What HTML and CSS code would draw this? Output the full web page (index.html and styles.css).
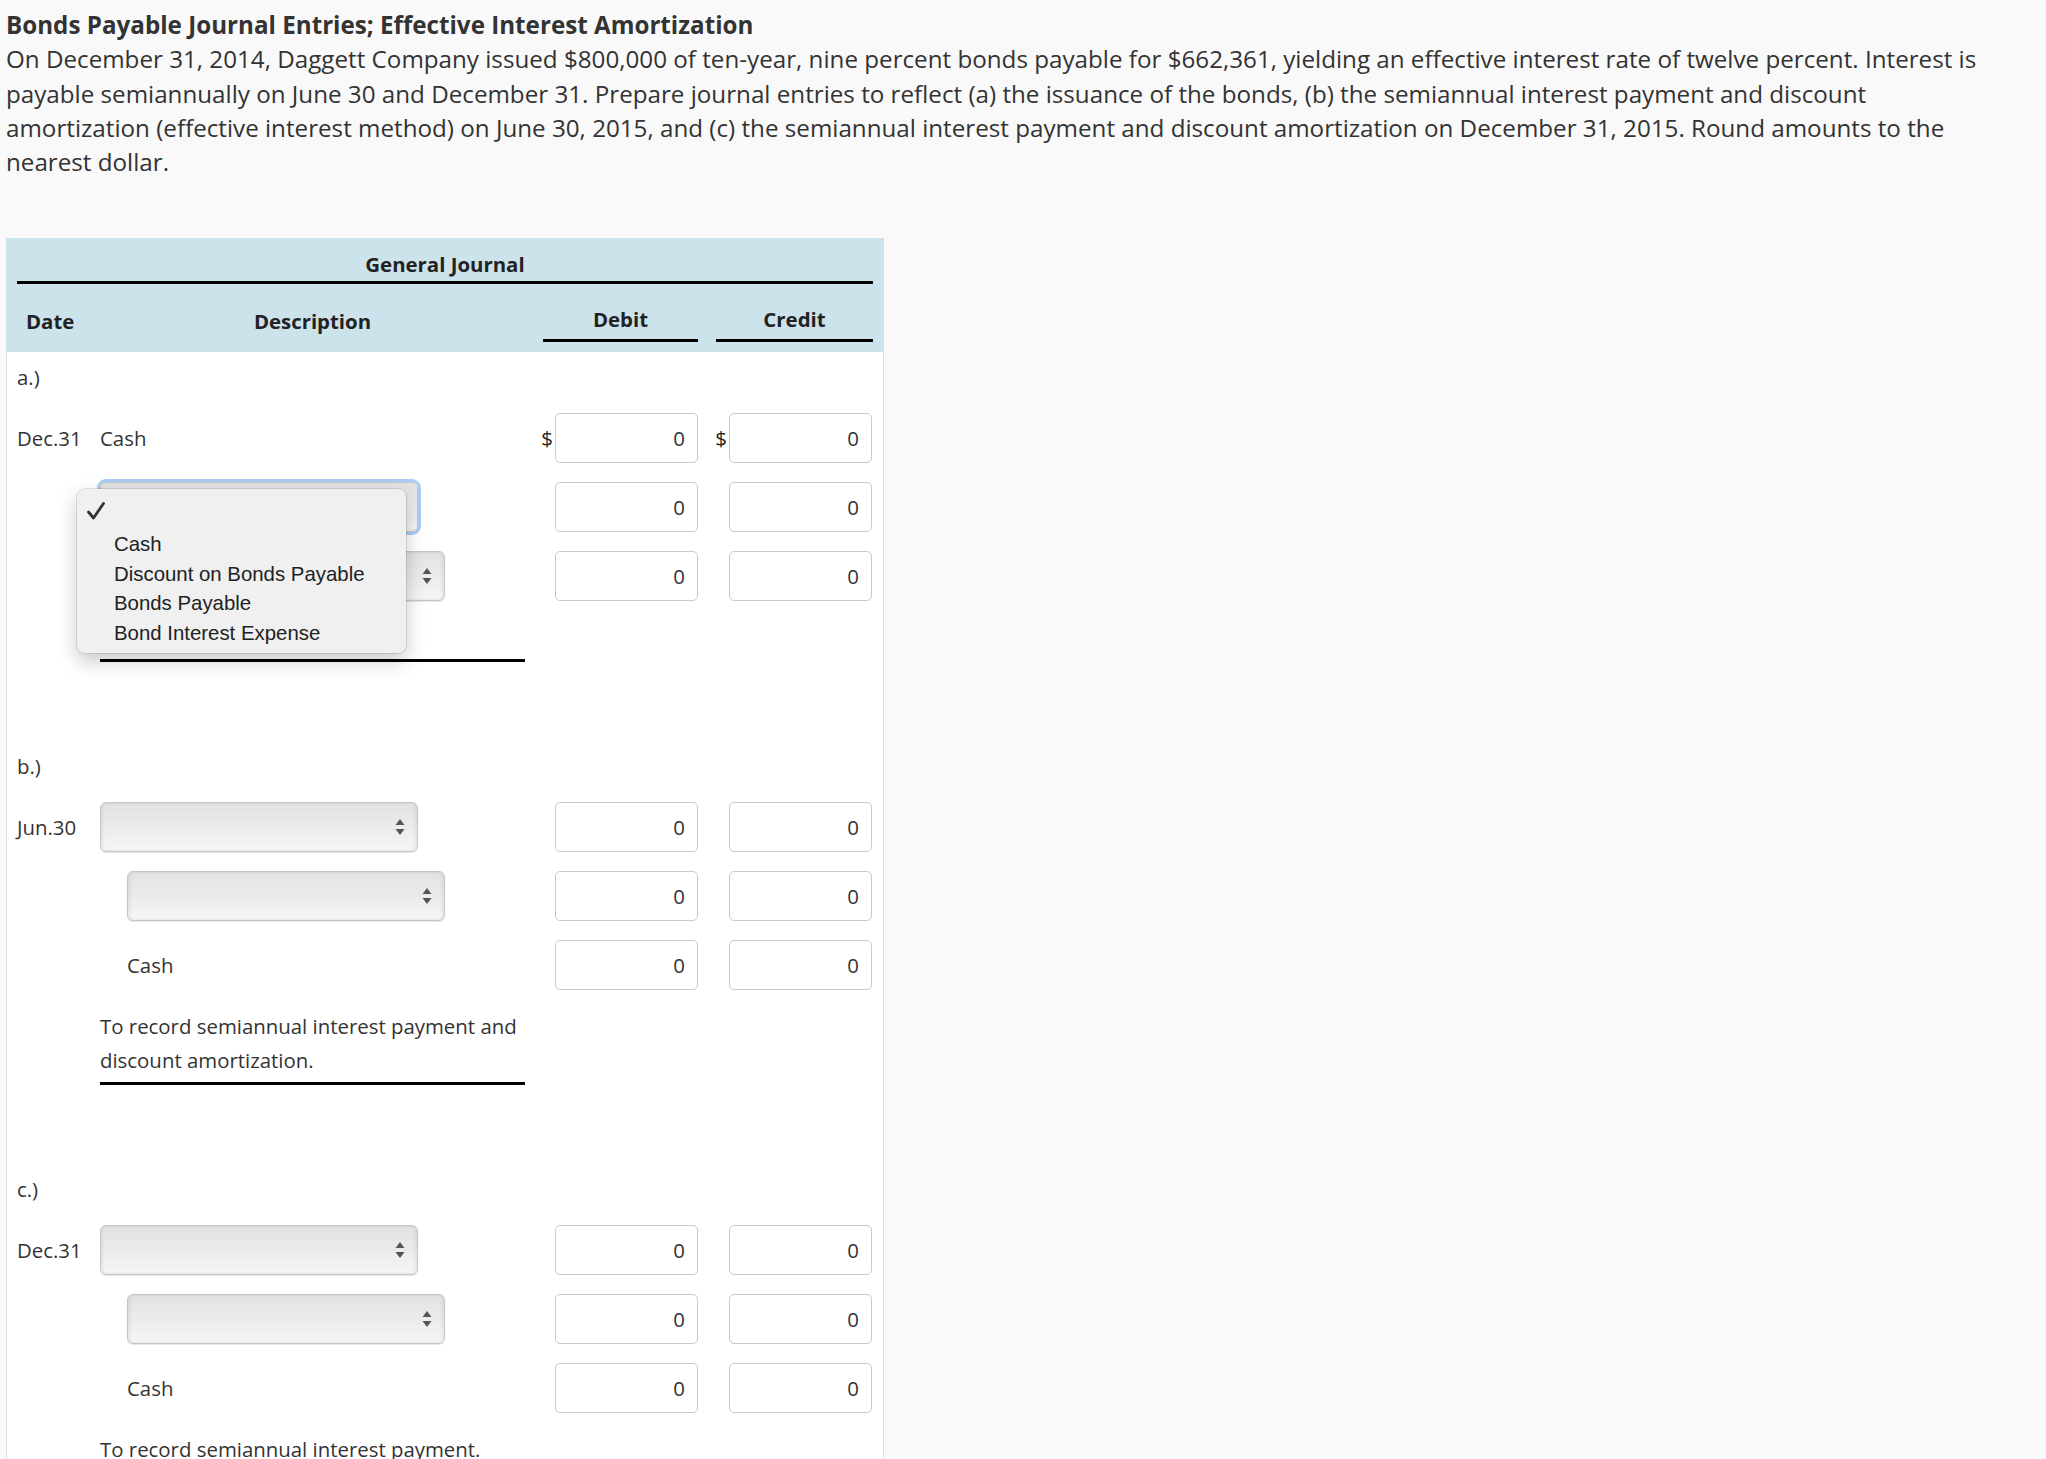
FILE: index.html
```html
<!DOCTYPE html>
<html lang="en">
<head>
    <meta charset="UTF-8">
    <title>Bonds Payable Journal Entries</title>
    <link rel="stylesheet" href="styles.css">
</head>
<body>
    <div class="page">
        <h1 class="title">Bonds Payable Journal Entries; Effective Interest Amortization</h1>
        <p class="intro">On December 31, 2014, Daggett Company issued $800,000 of ten-year, nine percent bonds payable for $662,361, yielding an effective interest rate of twelve percent. Interest is payable semiannually on June 30 and December 31. Prepare journal entries to reflect (a) the issuance of the bonds, (b) the semiannual interest payment and discount amortization (effective interest method) on June 30, 2015, and (c) the semiannual interest payment and discount amortization on December 31, 2015. Round amounts to the nearest dollar.</p>

        <div class="journal">
            <div class="journal-head">
                <div class="journal-title">General Journal</div>
                <div class="grid head-cols">
                    <div class="c-date">Date</div>
                    <div class="c-desc head-desc">Description</div>
                    <div class="c-debit head-amt">Debit</div>
                    <div class="c-credit head-amt">Credit</div>
                </div>
            </div>

            <div class="journal-body">
                <!-- a.) issuance -->
                <div class="entry">
                    <div class="entry-label">a.)</div>
                    <div class="grid line">
                        <div class="c-date">Dec.31</div>
                        <div class="c-desc">Cash</div>
                        <div class="c-debit amt"><span class="dollar">$</span><input class="num" type="text" value="0"></div>
                        <div class="c-credit amt"><span class="dollar">$</span><input class="num" type="text" value="0"></div>
                    </div>
                    <div class="grid line">
                        <div class="c-desc">
                            <div class="acct focused">
                                <svg class="arrows" width="10" height="16" viewBox="0 0 10 16"><path d="M5 0 L9.5 6 H0.5 Z M5 16 L9.5 10 H0.5 Z" fill="#555"/></svg>
                            </div>
                            <div class="menu">
                                <div class="menu-item">
                                    <svg class="check" width="18" height="18" viewBox="0 0 18 18"><path d="M1.5 10 L6.5 16 L16.5 1.5" fill="none" stroke="#333" stroke-width="2.8" stroke-linecap="round" stroke-linejoin="round"/></svg>
                                </div>
                                <div class="menu-item">Cash</div>
                                <div class="menu-item">Discount on Bonds Payable</div>
                                <div class="menu-item">Bonds Payable</div>
                                <div class="menu-item">Bond Interest Expense</div>
                            </div>
                        </div>
                        <div class="c-debit amt"><input class="num" type="text" value="0"></div>
                        <div class="c-credit amt"><input class="num" type="text" value="0"></div>
                    </div>
                    <div class="grid line">
                        <div class="c-desc">
                            <div class="acct indent">
                                <svg class="arrows" width="10" height="16" viewBox="0 0 10 16"><path d="M5 0 L9.5 6 H0.5 Z M5 16 L9.5 10 H0.5 Z" fill="#555"/></svg>
                            </div>
                        </div>
                        <div class="c-debit amt"><input class="num" type="text" value="0"></div>
                        <div class="c-credit amt"><input class="num" type="text" value="0"></div>
                    </div>
                    <div class="memo"><span class="hidden-memo">To record issuance.</span></div>
                </div>

                <!-- b.) June 30 -->
                <div class="entry">
                    <div class="entry-label">b.)</div>
                    <div class="grid line">
                        <div class="c-date">Jun.30</div>
                        <div class="c-desc">
                            <div class="acct">
                                <svg class="arrows" width="10" height="16" viewBox="0 0 10 16"><path d="M5 0 L9.5 6 H0.5 Z M5 16 L9.5 10 H0.5 Z" fill="#555"/></svg>
                            </div>
                        </div>
                        <div class="c-debit amt"><input class="num" type="text" value="0"></div>
                        <div class="c-credit amt"><input class="num" type="text" value="0"></div>
                    </div>
                    <div class="grid line">
                        <div class="c-desc">
                            <div class="acct indent">
                                <svg class="arrows" width="10" height="16" viewBox="0 0 10 16"><path d="M5 0 L9.5 6 H0.5 Z M5 16 L9.5 10 H0.5 Z" fill="#555"/></svg>
                            </div>
                        </div>
                        <div class="c-debit amt"><input class="num" type="text" value="0"></div>
                        <div class="c-credit amt"><input class="num" type="text" value="0"></div>
                    </div>
                    <div class="grid line">
                        <div class="c-desc indent">Cash</div>
                        <div class="c-debit amt"><input class="num" type="text" value="0"></div>
                        <div class="c-credit amt"><input class="num" type="text" value="0"></div>
                    </div>
                    <div class="memo">To record semiannual interest payment and discount amortization.</div>
                </div>

                <!-- c.) December 31 -->
                <div class="entry">
                    <div class="entry-label">c.)</div>
                    <div class="grid line">
                        <div class="c-date">Dec.31</div>
                        <div class="c-desc">
                            <div class="acct">
                                <svg class="arrows" width="10" height="16" viewBox="0 0 10 16"><path d="M5 0 L9.5 6 H0.5 Z M5 16 L9.5 10 H0.5 Z" fill="#555"/></svg>
                            </div>
                        </div>
                        <div class="c-debit amt"><input class="num" type="text" value="0"></div>
                        <div class="c-credit amt"><input class="num" type="text" value="0"></div>
                    </div>
                    <div class="grid line">
                        <div class="c-desc">
                            <div class="acct indent">
                                <svg class="arrows" width="10" height="16" viewBox="0 0 10 16"><path d="M5 0 L9.5 6 H0.5 Z M5 16 L9.5 10 H0.5 Z" fill="#555"/></svg>
                            </div>
                        </div>
                        <div class="c-debit amt"><input class="num" type="text" value="0"></div>
                        <div class="c-credit amt"><input class="num" type="text" value="0"></div>
                    </div>
                    <div class="grid line">
                        <div class="c-desc indent">Cash</div>
                        <div class="c-debit amt"><input class="num" type="text" value="0"></div>
                        <div class="c-credit amt"><input class="num" type="text" value="0"></div>
                    </div>
                    <div class="memo">To record semiannual interest payment.</div>
                </div>
            </div>
        </div>
    </div>
</body>
</html>
```

FILE: styles.css
```css
body {
    margin: 0;
    background-color: #f9f9f9;
    color: #333;
    font-family: 'Open Sans', 'Liberation Sans', sans-serif;
}

.page {
    padding: 8px 6px;
}

.title {
    margin: 0;
    font-size: 24.2px;
    line-height: 34.3px;
    font-weight: 700;
}

.intro {
    margin: 0;
    max-width: 1990px;
    font-size: 24.2px;
    line-height: 34.3px;
}

.journal {
    width: 878px;
    margin-top: 59px;
}

.journal-head {
    background-color: #cde3ec;
    padding: 9px 11px 10px;
    color: #222;
}

.journal-title {
    text-align: center;
    font-weight: 700;
    font-size: 20.4px;
    line-height: 34px;
    border-bottom: 3px solid #000;
}

.grid {
    display: grid;
    grid-template-columns: 83px 425px 18px 155px 18px 157px;
}

.c-date { grid-column: 1; }
.c-desc { grid-column: 2; }
.c-debit { grid-column: 4; }
.c-credit { grid-column: 6; }

.head-cols {
    padding-top: 18px;
    font-weight: 700;
    font-size: 20.4px;
    line-height: 34px;
    align-items: end;
}

.head-cols .c-date {
    padding-left: 9px;
    padding-bottom: 4px;
}

.head-desc {
    text-align: center;
    padding-bottom: 4px;
}

.head-amt {
    text-align: center;
    padding-bottom: 3px;
    border-bottom: 3px solid #000;
}

.journal-body {
    background-color: #fff;
    border: 1px solid #dedede;
    border-top: 0;
    padding: 8px 10px 40px;
    font-size: 20.4px;
    line-height: 34px;
}

.entry {
    display: flex;
    flex-direction: column;
    gap: 19px;
}

.entry + .entry {
    margin-top: 87px;
}

.line {
    height: 50px;
    align-items: center;
}

.amt {
    display: flex;
    justify-content: flex-end;
    align-items: center;
}

.c-credit.amt {
    padding-right: 1px;
}

.dollar {
    margin-right: 2px;
    color: #222;
}

.num {
    width: 143px;
    height: 50px;
    box-sizing: border-box;
    border: 1px solid #c9c9c9;
    border-radius: 5px;
    background: #fff;
    font-family: inherit;
    font-size: 20.4px;
    color: #333;
    text-align: right;
    padding: 0 12px;
    margin: 0;
}

.indent {
    margin-left: 27px;
}

.c-desc {
    position: relative;
}

.acct {
    position: relative;
    width: 318px;
    height: 50px;
    box-sizing: border-box;
    border: 1px solid #c6c6c6;
    border-radius: 6px;
    background: linear-gradient(to bottom, #e2e2e2 0%, #ebebeb 50%, #f6f6f6 100%);
    box-shadow: inset 2px 0 3px rgba(0, 0, 0, 0.06), inset -2px 0 3px rgba(0, 0, 0, 0.06), 0 1px 1px rgba(0, 0, 0, 0.1);
}

.acct.focused {
    box-shadow: 0 0 0 3px #a9cdf6;
}

.arrows {
    position: absolute;
    right: 12px;
    top: 16px;
}

.memo {
    margin-left: 83px;
    width: 425px;
    padding-bottom: 5px;
    border-bottom: 3px solid #000;
}

.hidden-memo {
    visibility: hidden;
}

.menu {
    position: absolute;
    left: -23px;
    top: 7px;
    width: 329px;
    box-sizing: border-box;
    padding: 11px 0 5px;
    background-color: #f0f0f0;
    border-radius: 8px;
    box-shadow: 0 0 0 1px rgba(0, 0, 0, 0.1), 0 8px 20px rgba(0, 0, 0, 0.22);
    font-family: 'Liberation Sans', Arial, sans-serif;
    font-size: 20.4px;
    line-height: 29.6px;
    color: #222;
    z-index: 2;
}

.menu-item {
    position: relative;
    height: 29.6px;
    padding-left: 37px;
}

.check {
    position: absolute;
    left: 10px;
    top: 2px;
}
```
